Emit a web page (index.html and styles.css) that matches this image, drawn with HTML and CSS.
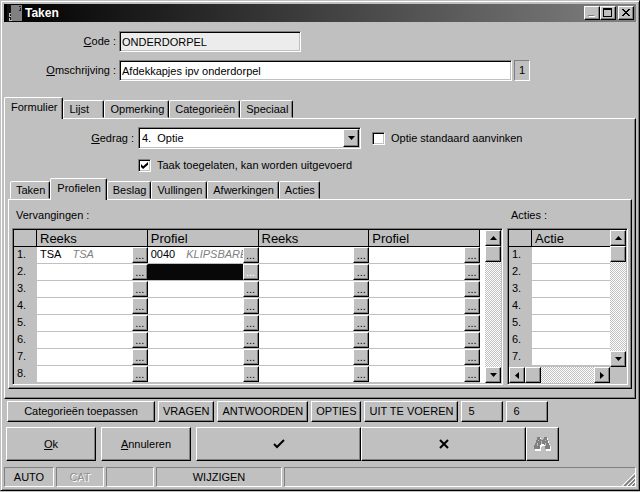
FILE: index.html
```html
<!DOCTYPE html>
<html lang="nl">
<head>
    <meta charset="UTF-8">
    <meta name="viewport" content="width=device-width, initial-scale=1.0">
    <title>Taken</title>
    <link rel="stylesheet" href="styles.css">
</head>
<body>
    <div class="window">
        <div class="titlebar">
            <svg class="app-icon" width="16" height="18" viewBox="0 0 16 18" shape-rendering="crispEdges">
                <rect x="0" y="0" width="4" height="18" fill="#111"/>
                <rect x="4" y="1" width="11" height="16" fill="#808080"/>
                <path d="M2 9h2v1h-1v2h1v1h-2zM2 14h1v2h2v1h-3z" fill="#c0c0c0"/>
                <path d="M12 2h2v1h-2zM13 4h1v3h-2v-1h1z" fill="#222"/>
            </svg>
            <h1>Taken</h1>
            <button class="title-button" aria-label="Minimaliseren"><svg width="12" height="10" viewBox="0 0 12 10" shape-rendering="crispEdges"><path d="M3 8h6v1h-6z" fill="#fff"/><path d="M2 7h6v1h-6z" fill="#808080"/></svg></button>
            <button class="title-button" aria-label="Maximaliseren"><svg width="12" height="10" viewBox="0 0 12 10" shape-rendering="crispEdges"><path d="M1 0h9v9h-9zM2 2v6h7v-6z" fill="#000" fill-rule="evenodd"/></svg></button>
            <button class="title-button close" aria-label="Sluiten"><svg width="12" height="10" viewBox="0 0 12 10" shape-rendering="crispEdges"><path d="M2 1h2v1h1v1h2v-1h1v-1h2v1h-1v1h-1v1h-1v1h1v1h1v1h1v1h-2v-1h-1v-1h-2v1h-1v1h-2v-1h1v-1h1v-1h1v-1h-1v-1h-1v-1h-1z"/></svg></button>
        </div>

        <div class="fields">
            <label for="code"><u>C</u>ode :</label>
            <input type="text" id="code" class="text-field code" value="ONDERDORPEL" readonly>
            <label for="omschrijving"><u>O</u>mschrijving :</label>
            <div class="field-row">
                <input type="text" id="omschrijving" class="text-field description" value="Afdekkapjes ipv onderdorpel">
                <span class="counter">1</span>
            </div>
        </div>

        <div class="tabs" role="tablist">
            <button class="tab active" role="tab" aria-selected="true">Formulier</button>
            <button class="tab lijst" role="tab">Lijst</button>
            <button class="tab" role="tab">Opmerking</button>
            <button class="tab" role="tab">Categorieën</button>
            <button class="tab" role="tab">Speciaal</button>
        </div>
        <div class="page">
            <div class="behaviour">
                <label for="gedrag"><u>G</u>edrag :</label>
                <div class="combo">
                    <select id="gedrag">
                        <option>4.&nbsp; Optie</option>
                    </select>
                    <span class="combo-arrow"><svg width="7" height="4" viewBox="0 0 7 4"><path d="M0 0h7l-3.500 4z"/></svg></span>
                </div>
                <label class="check"><input type="checkbox"> Optie standaard aanvinken</label>
            </div>
            <label class="check allowed"><input type="checkbox" checked> Taak toegelaten, kan worden uitgevoerd</label>

            <div class="tabs sub-tabs" role="tablist">
                <button class="tab" role="tab">Taken</button>
                <button class="tab active" role="tab" aria-selected="true">Profielen</button>
                <button class="tab" role="tab">Beslag</button>
                <button class="tab" role="tab">Vullingen</button>
                <button class="tab" role="tab">Afwerkingen</button>
                <button class="tab" role="tab">Acties</button>
            </div>
            <div class="page sub-page">
                <section class="replacements">
                    <h2>Vervangingen :</h2>
                    <div class="grid-frame">
                        <table class="grid">
                            <thead>
                                <tr><th class="nr"></th><th>Reeks</th><th>Profiel</th><th>Reeks</th><th>Profiel</th></tr>
                            </thead>
                            <tbody id="replacement-rows"></tbody>
                        </table>
                        <div class="scrollbar">
                            <button class="scroll-button" aria-label="Omhoog"><svg width="7" height="4" viewBox="0 0 7 4"><path d="M0 4h7l-3.500 -4z"/></svg></button>
                            <div class="thumb"></div>
                            <button class="scroll-button last" aria-label="Omlaag"><svg width="7" height="4" viewBox="0 0 7 4"><path d="M0 0h7l-3.500 4z"/></svg></button>
                        </div>
                    </div>
                </section>
                <section class="actions">
                    <h2>Acties :</h2>
                    <div class="grid-frame action-frame">
                        <table class="grid">
                            <thead>
                                <tr><th class="nr"></th><th>Actie</th></tr>
                            </thead>
                            <tbody id="action-rows"></tbody>
                        </table>
                        <div class="scrollbar">
                            <button class="scroll-button" aria-label="Omhoog"><svg width="7" height="4" viewBox="0 0 7 4"><path d="M0 4h7l-3.500 -4z"/></svg></button>
                            <div class="thumb"></div>
                            <button class="scroll-button last" aria-label="Omlaag"><svg width="7" height="4" viewBox="0 0 7 4"><path d="M0 0h7l-3.500 4z"/></svg></button>
                        </div>
                        <div class="scrollbar horizontal">
                            <button class="scroll-button" aria-label="Links"><svg width="4" height="7" viewBox="0 0 4 7"><path d="M4 0v7l-4 -3.500z"/></svg></button>
                            <div class="thumb"></div>
                            <button class="scroll-button last" aria-label="Rechts"><svg width="4" height="7" viewBox="0 0 4 7"><path d="M0 0v7l4 -3.500z"/></svg></button>
                        </div>
                    </div>
                </section>
            </div>
        </div>

        <div class="tool-row">
            <button class="button wide">Categorieën toepassen</button>
            <button class="button">VRAGEN</button>
            <button class="button">ANTWOORDEN</button>
            <button class="button">OPTIES</button>
            <button class="button">UIT TE VOEREN</button>
            <button class="button number">5</button>
            <button class="button number">6</button>
        </div>

        <div class="main-row">
            <button class="button ok"><span><u>O</u>k</span></button>
            <button class="button ok"><span><u>A</u>nnuleren</span></button>
            <div class="joined">
                <button class="button big" aria-label="Bevestigen"><svg width="12" height="10" viewBox="0 0 12 10"><path d="M1 5l3 3l7 -7" fill="none" stroke="#000" stroke-width="2"/></svg></button>
                <button class="button big" aria-label="Wissen"><svg width="10" height="10" viewBox="0 0 10 10"><path d="M1 1l8 8M9 1l-8 8" stroke="#000" stroke-width="2"/></svg></button>
                <button class="button find" aria-label="Zoeken" disabled><svg width="17" height="16" viewBox="0 0 17 16" shape-rendering="crispEdges">
                    <path d="M4 2h3v2h1v1h2v-1h1v-2h3v3h1v3h1v2h1v5h-5v-4h-1v-1h-3v1h-1v4h-6v-5h1v-2h1v-3h1z" fill="#fff"/>
                    <path d="M3 1h3v2h1v1h2v-1h1v-2h3v3h1v3h1v2h1v4h-5v-4h-1v-1h-3v1h-1v4h-6v-4h1v-2h1v-3h1z" fill="#808080"/>
                    <path d="M4 4h1v1h-1zM3 7h1v3h-1zM11 4h1v1h-1zM11 7h1v3h-1zM7 5h1v3h-1z" fill="#c0c0c0"/>
                </svg></button>
            </div>
        </div>

        <div class="statusbar">
            <span class="status auto">AUTO</span>
            <span class="status short off">CAT</span>
            <span class="status short"></span>
            <span class="status mode">WIJZIGEN</span>
            <span class="status rest">
                <svg width="13" height="13" viewBox="0 0 13 13"><path d="M0 13L13 0M5 13L13 5M9 13L13 9" stroke="#fff"/><path d="M2 13L13 2M3 13L13 3M6 13L13 6M7 13L13 7M10 13L13 10M11 13L13 11" stroke="#808080"/></svg>
            </span>
        </div>
    </div>
    <script src="script.js"></script>
</body>
</html>
```
FILE: styles.css
```css
* {
    box-sizing: border-box;
}
body {
    margin: 0;
    background-color: #c0c0c0;
    font-family: "Liberation Sans", Arial, sans-serif;
    font-size: 11px;
    line-height: 13px;
    color: #000;
}
button, input, select {
    font: inherit;
    color: inherit;
    margin: 0;
    border-radius: 0;
}
button svg {
    display: block;
}
h1, h2 {
    margin: 0;
    font-size: 11px;
}
h2 {
    font-weight: normal;
}
.window {
    padding: 3px;
    border: 1px solid;
    border-color: #c0c0c0 #000 #000 #c0c0c0;
    box-shadow: inset 1px 1px #fff, inset -1px -1px #808080;
}

/* title bar */
.titlebar {
    display: flex;
    align-items: center;
    height: 18px;
    padding: 0 2px;
    background: linear-gradient(to right, #000, #808080);
    color: #fff;
}
.titlebar h1 {
    flex: 1;
    padding-left: 2px;
    font-size: 12px;
}
.app-icon {
    margin-left: 1px;
}
.title-button {
    display: flex;
    align-items: center;
    justify-content: center;
    width: 16px;
    height: 14px;
    padding: 0;
}
.title-button.close {
    margin-left: 2px;
}
.title-button, .button, .thumb, .scroll-button, .combo-arrow, .dots {
    background-color: #c0c0c0;
    border: 1px solid;
    border-color: #fff #000 #000 #fff;
    box-shadow: inset -1px -1px #808080;
}

/* top fields */
.fields {
    display: grid;
    grid-template-columns: 112px 1fr;
    gap: 8px 3px;
    align-items: center;
    padding: 9px 0 16px;
}
.fields > label {
    text-align: right;
}
.field-row {
    display: flex;
    gap: 2px;
}
.text-field {
    height: 21px;
    padding: 0 2px;
    background-color: #fff;
    outline: none;
}
.text-field, .combo, .check input, .grid-frame {
    border: 1px solid;
    border-color: #808080 #fff #fff #808080;
    box-shadow: inset 1px 1px #000, inset -1px -1px #c0c0c0;
}
.text-field.code {
    width: 182px;
    background-color: #ececec;
}
.text-field.description {
    width: 393px;
}
.counter {
    width: 16px;
    padding: 3px 0;
    text-align: center;
    border: 1px solid;
    border-color: #808080 #fff #fff #808080;
}

/* tabs */
.tabs {
    display: flex;
    align-items: flex-end;
    height: 21px;
}
.tab {
    height: 18px;
    padding: 1px 4px 0 5px;
    background-color: #c0c0c0;
    border: 1px solid;
    border-color: #fff #000 transparent #fff;
    border-radius: 2px 2px 0 0;
    box-shadow: inset -1px 0 #808080;
    white-space: nowrap;
}
.tab.active {
    position: relative;
    height: 22px;
    padding: 1px 5px 4px 6px;
    margin-bottom: -1px;
    border-bottom: 0;
}
.tab.lijst {
    width: 41px;
    text-align: left;
}
.page {
    padding: 8px 3px 9px;
    border: 1px solid;
    border-color: #fff #000 #000 #fff;
    box-shadow: inset -1px -1px #808080;
}

/* behaviour */
.behaviour {
    display: flex;
    align-items: center;
}
.behaviour > label:first-child {
    width: 126px;
    margin-right: 4px;
    text-align: right;
}
.combo {
    position: relative;
    width: 223px;
    height: 22px;
    margin-right: 11px;
    padding: 1px;
    background-color: #fff;
}
.combo select {
    width: 100%;
    height: 100%;
    padding: 0 2px;
    border: 0;
    appearance: none;
    background: transparent;
    outline: none;
}
.combo-arrow {
    position: absolute;
    top: 1px;
    right: 1px;
    bottom: 1px;
    display: flex;
    align-items: center;
    justify-content: center;
    width: 16px;
    pointer-events: none;
}
.check {
    display: flex;
    align-items: center;
    gap: 6px;
}
.check input {
    appearance: none;
    width: 13px;
    height: 13px;
    background-color: #fff;
}
.check input:checked::before {
    content: "";
    display: block;
    width: 7px;
    height: 7px;
    margin: 2px;
    background-color: #000;
    clip-path: polygon(0 30%, 30% 60%, 100% 0, 100% 40%, 30% 100%, 0 70%);
}
.check.allowed {
    margin: 10px 0 6px 130px;
}

/* replacement and action grids */
.sub-tabs {
    padding-left: 2px;
}
.sub-page {
    display: flex;
    gap: 4px;
    padding: 9px 3px 3px;
}
.replacements {
    flex: 1;
}
.actions {
    width: 121px;
}
.sub-page h2 {
    padding: 0 4px 6px;
}
.grid-frame {
    display: flex;
    gap: 5px;
    height: 157px;
    padding: 1px;
    background-color: #fff;
}
.grid-frame.action-frame {
    display: grid;
    grid-template-columns: 1fr 16px;
    grid-template-rows: 1fr 16px;
    gap: 0;
    background-color: #c0c0c0;
}
.grid {
    flex: 1;
    align-self: start;
    width: 100%;
    border-spacing: 0;
    table-layout: fixed;
}
.grid th {
    height: 17px;
    padding: 2px 0 0 3px;
    background-color: #c0c0c0;
    border-right: 1px solid #000;
    border-bottom: 1px solid #000;
    font-size: 13px;
    font-weight: normal;
    line-height: 14px;
    text-align: left;
}
.action-frame th:last-child {
    border-right: 0;
}
.grid td {
    height: 17px;
    padding: 0;
    background-color: #fff;
    border-bottom: 1px solid #c0c0c0;
    line-height: 14px;
    vertical-align: top;
}
.grid .nr {
    width: 23px;
    padding-left: 3px;
    background-color: #c0c0c0;
}
.cell {
    display: flex;
    height: 16px;
}
.cell .value {
    flex: 1;
    overflow: hidden;
    padding-left: 3px;
    white-space: nowrap;
}
.cell i {
    margin-left: 11px;
    color: #808080;
}
.cell.selected .value {
    background-color: #080808;
}
.cell.selected .dots {
    color: #fff;
}
.dots {
    width: 16px;
    height: 16px;
    padding: 0;
    line-height: 12px;
}
.scrollbar {
    display: flex;
    flex-direction: column;
    width: 16px;
    background: repeating-conic-gradient(#fff 0 25%, #c0c0c0 0 50%) 0 0 / 2px 2px;
}
.scrollbar.horizontal {
    flex-direction: row;
    width: auto;
}
.thumb {
    width: 16px;
    height: 16px;
}
.scroll-button {
    display: flex;
    align-items: center;
    justify-content: center;
    width: 16px;
    height: 16px;
    padding: 0;
}
.scroll-button.last {
    margin-top: auto;
}
.horizontal .scroll-button.last {
    margin: 0 0 0 auto;
}

/* bottom buttons */
.tool-row {
    display: flex;
    gap: 3px;
    margin: 2px 0 5px 3px;
}
.tool-row .button {
    height: 21px;
    padding: 0 4px;
    white-space: nowrap;
}
.tool-row .wide {
    width: 148px;
}
.tool-row .number {
    width: 42px;
    padding-left: 6px;
    text-align: left;
}
.main-row {
    display: flex;
    gap: 5px;
    margin-left: 2px;
}
.main-row .button {
    display: flex;
    align-items: center;
    justify-content: center;
    height: 34px;
}
.main-row .ok {
    width: 90px;
}
.joined {
    display: flex;
}
.joined .big {
    width: 165px;
}
.joined .find {
    width: 33px;
    padding: 0;
}

/* status bar */
.statusbar {
    display: flex;
    gap: 2px;
    margin-top: 6px;
}
.status {
    height: 20px;
    padding-top: 3px;
    border: 1px solid;
    border-color: #808080 #fff #fff #808080;
    text-align: center;
}
.status.auto {
    width: 50px;
}
.status.short {
    width: 48px;
}
.status.off {
    color: #909090;
    text-shadow: 1px 1px #fff;
}
.status.mode {
    width: 126px;
}
.status.rest {
    display: flex;
    flex: 1;
    align-items: flex-end;
    justify-content: flex-end;
    padding: 0;
}
```
FILE: script.js
```javascript
var replacements = {
    '1-1': { code: 'TSA', name: 'TSA' },
    '1-2': { code: '0040', name: 'KLIPSBARE' }
};
var selectedCell = '2-2';

function createCell(key) {
    var item = replacements[key];
    var text = item ? item.code + '<i>' + item.name + '</i>' : '';
    var selected = key === selectedCell ? ' selected' : '';
    return '<td><div class="cell' + selected + '"><span class="value">' + text +
        '</span><button class="dots">...</button></div></td>';
}

function fillReplacements() {
    var html = '';
    for (var row = 1; row <= 8; row++) {
        html += '<tr><td class="nr">' + row + '.</td>';
        for (var col = 1; col <= 4; col++) {
            html += createCell(row + '-' + col);
        }
        html += '</tr>';
    }
    document.getElementById('replacement-rows').innerHTML = html;
}

function fillActions() {
    var html = '';
    for (var row = 1; row <= 7; row++) {
        html += '<tr><td class="nr">' + row + '.</td><td></td></tr>';
    }
    document.getElementById('action-rows').innerHTML = html;
}

fillReplacements();
fillActions();
```
